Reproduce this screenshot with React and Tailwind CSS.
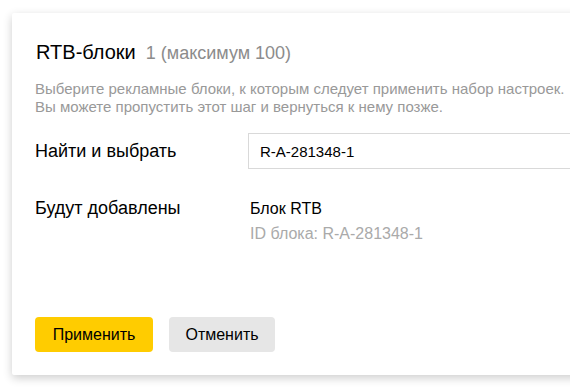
export default function App() {
  return (
    <div className="h-[391px] w-[570px] overflow-hidden bg-white pl-[12px] pt-[13px] font-['Liberation_Sans',Arial,sans-serif]">
      <div className="flex h-[362px] w-[620px] flex-col rounded-[2px] bg-white pl-[23px] pt-[24px] shadow-[0_3px_10px_rgba(0,0,0,0.2)]">
        <div className="flex items-baseline gap-[10px] pl-[1px]">
          <h1 className="text-[20px] text-black">RTB-блоки</h1>
          <span className="text-[18px] text-[#8c8c8c]">1 (максимум 100)</span>
        </div>
        <p className="mt-[13px] text-[15px] leading-[18px] text-[#999]">
          Выберите рекламные блоки, к которым следует применить набор настроек.
          <br />
          Вы можете пропустить этот шаг и вернуться к нему позже.
        </p>
        <div className="mt-[17px] flex items-center">
          <span className="w-[213px] text-[18px] text-black">Найти и выбрать</span>
          <input
            readOnly
            value="R-A-281348-1"
            className="h-[36px] flex-1 border border-[#d9d9d9] px-[11px] text-[15px] text-black outline-none"
          />
        </div>
        <div className="mt-[26px] flex">
          <span className="w-[215px] text-[18px] text-black">Будут добавлены</span>
          <div className="flex flex-col pt-[3px]">
            <span className="text-[16px] leading-[22px] text-black">Блок RTB</span>
            <span className="mt-[4px] text-[16px] leading-[20px] text-[#aaa]">ID блока: R-A-281348-1</span>
          </div>
        </div>
        <div className="mt-auto mb-[23px] flex gap-[16px]">
          <button className="h-[35px] w-[118px] rounded-[4px] bg-[#ffcc00] text-[16px] text-black">Применить</button>
          <button className="h-[35px] w-[106px] rounded-[4px] bg-[#e6e6e6] text-[16px] text-black">Отменить</button>
        </div>
      </div>
    </div>
  );
}
